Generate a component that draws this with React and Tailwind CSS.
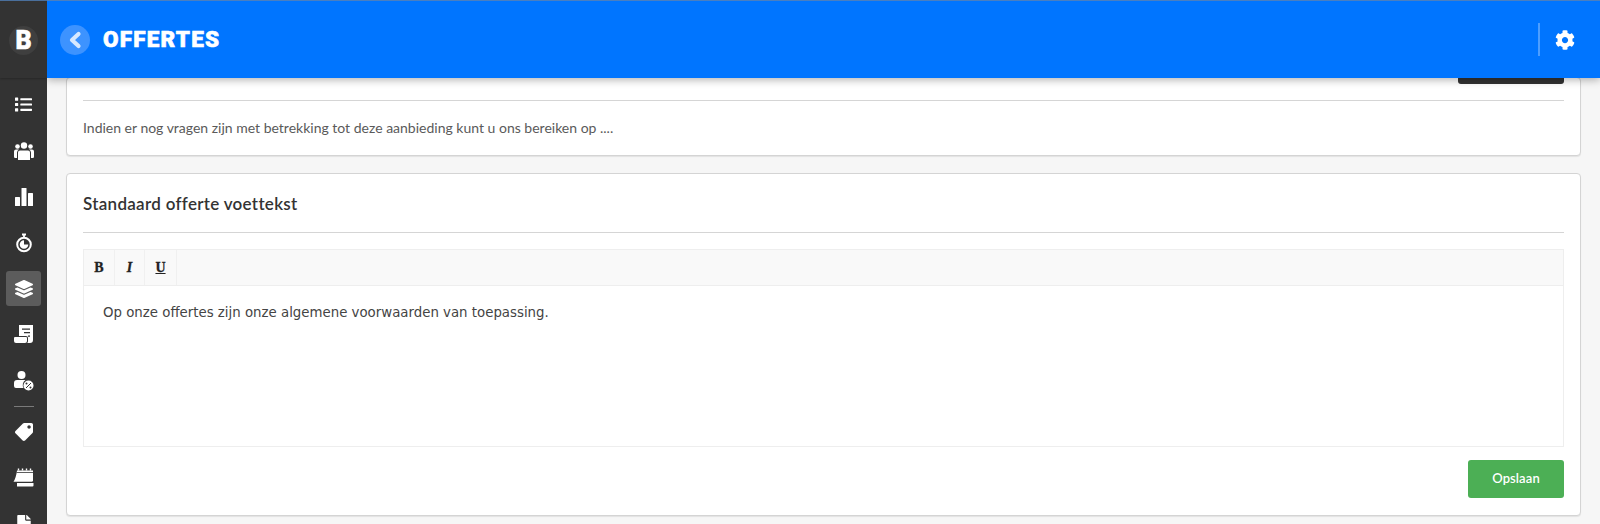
import React from "react";
import { FaList, FaLayerGroup, FaTag, FaCog, FaFile } from "react-icons/fa";

const Back = () => (
  <svg width="14" height="18" viewBox="0 0 14 18" fill="none" stroke="currentColor" strokeWidth="4.200" strokeLinecap="round" strokeLinejoin="round">
    <path d="M10.500 3 4 9l6.500 6" />
  </svg>
);
const Users = () => (
  <svg width="20" height="18" viewBox="0 0 20 18" fill="currentColor">
    <circle cx="10" cy="3.500" r="3.200" />
    <circle cx="3.500" cy="4.500" r="2.300" />
    <circle cx="16.500" cy="4.500" r="2.300" />
    <path d="M6 8.500h8a2 2 0 0 1 2 2V18H4v-7.500a2 2 0 0 1 2-2Z" />
    <path d="M2 7.500h3a3.500 3.500 0 0 0-2 3V16H1.200A1.200 1.200 0 0 1 0 14.800V9.500a2 2 0 0 1 2-2Z" />
    <path d="M18 7.500h-3a3.500 3.500 0 0 1 2 3V16h1.800a1.200 1.200 0 0 0 1.200-1.200V9.500a2 2 0 0 0-2-2Z" />
  </svg>
);
const Bars = () => (
  <svg width="18" height="18" viewBox="0 0 18 18" fill="currentColor">
    <rect x="0" y="9" width="5" height="9" rx="0.500" />
    <rect x="6.500" y="0" width="5" height="18" rx="0.500" />
    <rect x="13" y="5" width="5" height="13" rx="0.500" />
  </svg>
);
const Timer = () => (
  <svg width="18" height="20" viewBox="0 0 18 20" fill="none" stroke="currentColor">
    <circle cx="9" cy="11.500" r="6.800" strokeWidth="2" />
    <path d="M9 11.500h4.300A4.300 4.300 0 1 1 9 7.200Z" fill="currentColor" stroke="none" />
    <path d="M7 1.500h4M9 1.500v3" strokeWidth="1.800" />
  </svg>
);
const Invoice = () => (
  <svg width="20" height="19" viewBox="0 0 20 19" fill="currentColor">
    <path d="M5 0h14v15a3 3 0 0 1-3 3h-3a2 2 0 0 0 1-2v-3a2 2 0 0 0-2-2H5Z" />
    <path d="M1 12h11a1 1 0 0 1 1 1v3a2 2 0 0 1-2 2H2a2 2 0 0 1-2-2v-3a1 1 0 0 1 1-1Z" />
    <path d="M8 3.500h8v1.300H8ZM10 7h6v1.300h-6ZM14 10.500h2v1.300h-2Z" fill="#333333" />
  </svg>
);
const UserPercent = () => (
  <svg width="20" height="20" viewBox="0 0 20 20" fill="currentColor">
    <circle cx="7.500" cy="4" r="4" />
    <path d="M3 9h8.500a6 6 0 0 0-2 8H2a2 2 0 0 1-2-2v-3a3 3 0 0 1 3-3Z" />
    <circle cx="14.500" cy="14.500" r="5" />
    <path d="M12 17l5-5" stroke="#333333" strokeWidth="1" />
    <circle cx="12.500" cy="12.500" r="1" fill="#333333" />
    <circle cx="16.500" cy="16.500" r="1" fill="#333333" />
  </svg>
);
const Calendar = () => (
  <svg width="21" height="19" viewBox="0 0 21 19" fill="currentColor">
    <path d="M4 2.500h16v10.500l-1 .7H0.500Q3 10 4 2.500Z" />
    <path d="M5.500 0.500v2M9.500 0.500v2M13.500 0.500v2M17.500 0.500v2" stroke="currentColor" strokeWidth="1.400" />
    <path d="M4 15h16.500v2.500a1 1 0 0 1-1 1H4Z" />
    <path d="M3.500 4.500h16.500" stroke="#333333" strokeWidth="0.800" />
  </svg>
);

const Rail = ({ children, active }) => (
  <div className={`h-[35px] w-[35px] flex items-center justify-center rounded-[3px] mb-[11px] text-white ${active ? "bg-[#5c5c5c]" : ""}`}>
    {children}
  </div>
);

export default function App() {
  return (
    <div className="h-[524px] w-[1600px] flex overflow-hidden bg-[#f6f6f6] font-['Lato',sans-serif] text-[#333333]">
      <aside className="w-[47px] shrink-0 h-full overflow-hidden bg-[#333333] flex flex-col items-center relative z-20">
        <div className="w-full h-[78px] shrink-0 flex items-center justify-center border-t border-[#4a6f9c] shadow-[0_1px_2px_rgba(0,0,0,0.25)]">
          <div className="w-[29px] h-[29px] mt-[2px] rounded-full bg-[#3f3f3f] flex items-center justify-center text-white font-['Roboto',sans-serif] font-black text-[25px] leading-none [-webkit-text-stroke:0.6px_white]">B</div>
        </div>
        <div className="flex flex-col items-center pt-[9px]">
          <Rail><FaList size={17} /></Rail>
          <Rail><Users /></Rail>
          <Rail><Bars /></Rail>
          <Rail><Timer /></Rail>
          <Rail active><FaLayerGroup size={18} /></Rail>
          <Rail><Invoice /></Rail>
          <Rail><UserPercent /></Rail>
          <div className="w-[20px] h-px bg-[#7a7a7a] -mt-[3px] mb-[7px]" />
          <Rail><FaTag size={18} className="-scale-x-100" /></Rail>
          <Rail><Calendar /></Rail>
          <Rail><FaFile size={18} /></Rail>
        </div>
      </aside>

      <div className="flex-1 min-w-0 h-full flex flex-col">
        <header className="h-[78px] shrink-0 relative z-10 bg-[#0075ff] border-t border-[#4a7fc0] shadow-[0_2px_8px_rgba(0,0,0,0.3)] flex items-center pl-[13px] pr-[25px] text-white">
          <div className="w-[30px] h-[30px] rounded-full bg-[#3d93ff] flex items-center justify-center text-[#d8e9ff]">
            <Back />
          </div>
          <h1 className="ml-[13px] font-['Roboto',sans-serif] font-black text-[22.500px] leading-none tracking-[1.200px] [-webkit-text-stroke:0.6px_white]">OFFERTES</h1>
          <div className="ml-auto w-[2px] h-[33px] bg-[#4d9eff]" />
          <FaCog size={20} className="ml-[15px]" />
        </header>

        <main className="flex-1 min-h-0 overflow-hidden px-[19px]">
          <section className="bg-white rounded-[4px] border border-[#d4d4d4] shadow-[0_1px_1px_rgba(0,0,0,0.08)] px-[16px] h-[79px] -mt-px">
            <div className="flex justify-end h-[22px]">
              <div className="w-[106px] h-[6px] bg-[#333333] rounded-b-[3px]" />
            </div>
            <div className="h-px bg-[#d5d5d5]" />
            <p className="mt-[18px] text-[14px] leading-[18px] text-[#5a5a5a]">Indien er nog vragen zijn met betrekking tot deze aanbieding kunt u ons bereiken op ....</p>
          </section>

          <section className="mt-[17px] bg-white rounded-[4px] border border-[#d4d4d4] shadow-[0_1px_1px_rgba(0,0,0,0.08)] px-[16px] h-[343px]">
            <h2 className="h-[58px] flex items-center pt-[2px] text-[17px] font-semibold text-[#333333] tracking-[0.300px]">Standaard offerte voettekst</h2>
            <div className="h-px bg-[#d5d5d5]" />
            <div className="mt-[16px] border border-[#eeeeee] h-[198px] flex flex-col">
              <div className="h-[36px] shrink-0 bg-[#f9f9f9] border-b border-[#eeeeee] flex font-['Liberation_Serif',serif] font-bold text-[14px] text-[#222222] [-webkit-text-stroke:0.3px_#222222]">
                <span className="w-[31px] flex items-center justify-center border-r border-[#f0f0f0]">B</span>
                <span className="w-[30px] flex items-center justify-center border-r border-[#f0f0f0] italic">I</span>
                <span className="w-[32px] flex items-center justify-center border-r border-[#f0f0f0] underline">U</span>
              </div>
              <p className="px-[19px] pt-[18px] font-['DejaVu_Sans',sans-serif] text-[13.330px] leading-[18px] text-[#444444]">Op onze offertes zijn onze algemene voorwaarden van toepassing.</p>
            </div>
            <div className="mt-[13px] flex justify-end">
              <button className="w-[96px] h-[38px] rounded-[3px] bg-[#4caf55] text-white text-[13px] font-semibold tracking-[0.100px]">Opslaan</button>
            </div>
          </section>
        </main>
      </div>
    </div>
  );
}
